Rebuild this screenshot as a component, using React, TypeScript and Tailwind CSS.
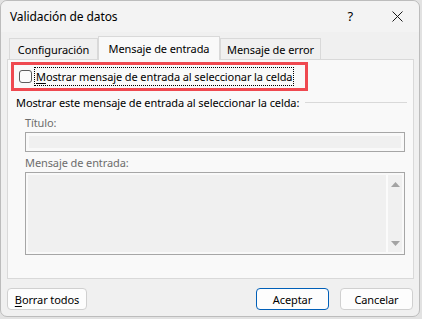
import React from "react";

const font = { fontFamily: '"Segoe UI", "Noto Sans", sans-serif' };

function CloseIcon() {
  return (
    <svg width="11" height="11" viewBox="0 0 11 11" fill="none" stroke="#1a1a1a" strokeWidth="1">
      <path d="M0.5 0.5 L10.5 10.5 M10.5 0.5 L0.5 10.5" />
    </svg>
  );
}

function Tab({ label, active }: { label: string; active?: boolean }) {
  return (
    <div
      className={
        active
          ? "relative z-10 -mb-px flex h-[24px] w-[122px] items-center justify-center border border-b-0 border-[#d9d9d9] bg-[#f9f9f9] pb-[1px] text-black"
          : "flex h-[21px] items-center justify-center border border-b-0 border-[#d9d9d9] bg-[#f0f0f0] pt-[1px] text-black"
      }
    >
      {label}
    </div>
  );
}

function Btn({ children, primary, w }: { children: React.ReactNode; primary?: boolean; w: string }) {
  return (
    <button
      className={`h-[22px] ${w} rounded-[4px] border bg-[#fdfdfd] text-[11px] tracking-[-0.1px] text-black ${
        primary ? "border-[#005fb8]" : "border-[#d0d0d0]"
      }`}
    >
      {children}
    </button>
  );
}

export default function App() {
  return (
    <div
      className="h-[319px] w-[422px] whitespace-nowrap bg-[#e2e2e2] text-[11px] leading-none tracking-[-0.1px]"
      style={font}
    >
      <div className="flex h-[317px] w-[420px] flex-col rounded-[7px] border border-[#bcbcbc] bg-[#f0f0f0]">
        {/* Title bar */}
        <div className="flex h-[31px] items-center rounded-t-[7px] bg-[#f3f3f3] pl-[9px]">
          <span className="text-[12px]">Validación de datos</span>
          <span className="ml-auto mr-[39px] text-[13px]">?</span>
          <span className="mr-[16px] flex">
            <CloseIcon />
          </span>
        </div>

        {/* Tabs */}
        <div className="flex h-[27px] items-end pl-[8px]">
          <div className="w-[89px]">
            <Tab label="Configuración" />
          </div>
          <Tab label="Mensaje de entrada" active />
          <div className="w-[101px]">
            <Tab label="Mensaje de error" />
          </div>
        </div>

        {/* Panel */}
        <div className="ml-[6px] h-[220px] w-[407px] border border-[#d9d9d9] bg-[#f9f9f9]">
          <div className="ml-[3px] mt-[2px] flex h-[29px] w-[297px] items-center border-[3px] border-[#ef4950] pl-[5px]">
            <span className="h-[13px] w-[13px] rounded-[3px] border border-[#5c5c5c] bg-[#fbfbfb]" />
            <span className="ml-[2px] border border-dotted border-black px-[1px] py-[3px]">
              <u className="underline-offset-2">M</u>ostrar mensaje de entrada al seleccionar la celda
            </span>
          </div>

          <div className="mt-[6px] flex items-center pl-[8px]">
            <span>Mostrar este mensaje de entrada al seleccionar la celda:</span>
            <span className="ml-[6px] mr-[6px] h-px flex-1 bg-[#d9d9d9]" />
          </div>

          <div className="pl-[17px] pr-[7px] text-[#6d6d6d]">
            <div className="mt-[9px]">Título:</div>
            <div className="mt-[4px] h-[20px] w-[380px] border border-[#a6a6a6] p-[3px]">
              <div className="h-full w-full bg-[#f0f0f0]" />
            </div>
            <div className="mt-[5px]">Mensaje de entrada:</div>
            <div className="mt-[4px] flex h-[83px] w-[380px] border border-[#a6a6a6] p-[2px]">
              <div className="h-full flex-1 bg-[#f0f0f0]" />
              <div className="flex w-[16px] flex-col items-center justify-between border-l-2 border-[#fbfbfb] bg-[#f0f0f0] pb-[6px] pt-[7px]">
                <svg width="9" height="5" viewBox="0 0 9 5">
                  <path d="M0 5 L4.5 0 L9 5 Z" fill="#a3a3a3" />
                </svg>
                <svg width="9" height="5" viewBox="0 0 9 5">
                  <path d="M0 0 L4.5 5 L9 0 Z" fill="#a3a3a3" />
                </svg>
              </div>
            </div>
          </div>
        </div>

        {/* Buttons */}
        <div className="mt-[9px] flex items-center pl-[6px] pr-[6px]">
          <Btn w="w-[80px]">
            <u className="underline-offset-2">B</u>orrar todos
          </Btn>
          <div className="ml-auto flex gap-[11px]">
            <Btn w="w-[73px]" primary>
              Aceptar
            </Btn>
            <Btn w="w-[73px]">Cancelar</Btn>
          </div>
        </div>
      </div>
    </div>
  );
}
